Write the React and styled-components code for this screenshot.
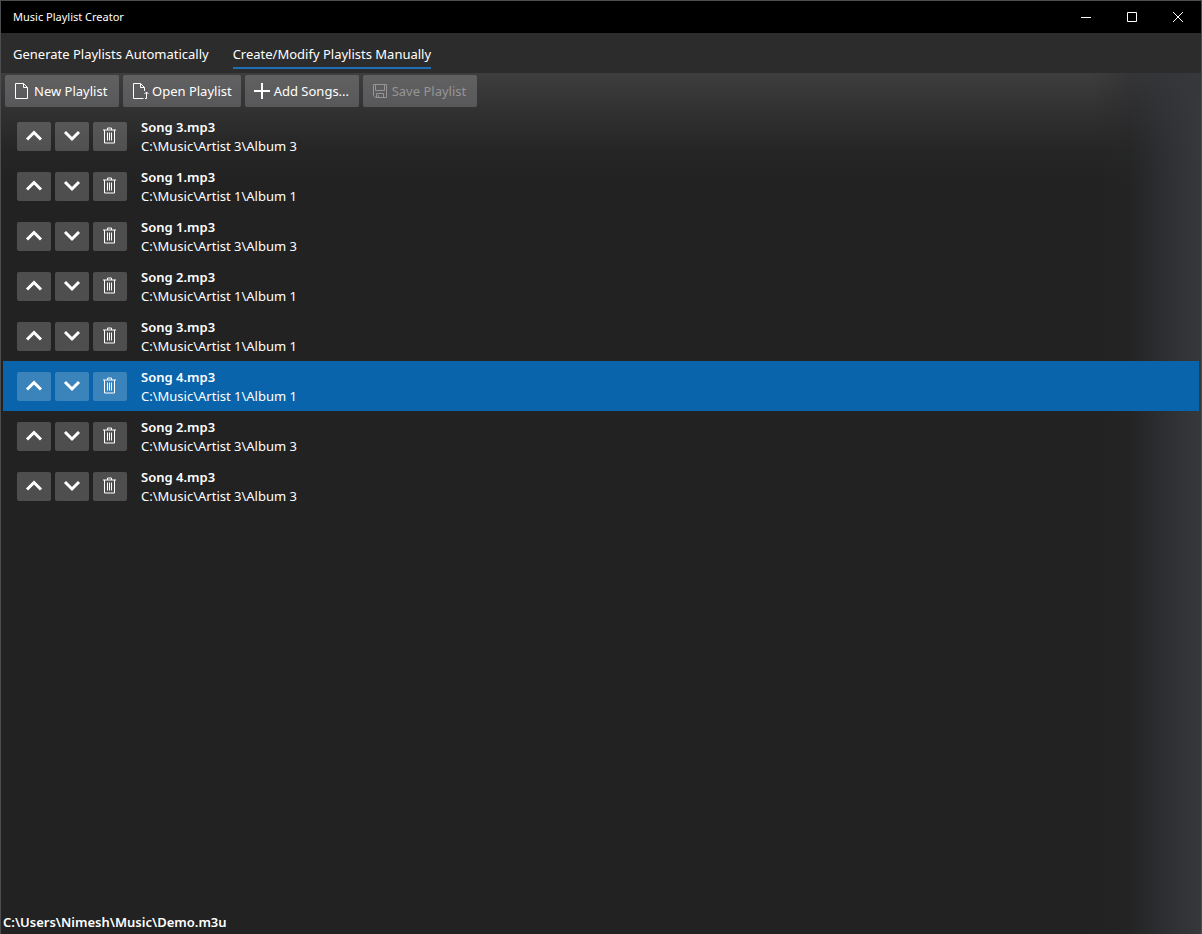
import { useState } from 'react';
import styled, { createGlobalStyle } from 'styled-components';

const songs = [
	{ id: 1, name: 'Song 3.mp3', folder: 'C:\\Music\\Artist 3\\Album 3' },
	{ id: 2, name: 'Song 1.mp3', folder: 'C:\\Music\\Artist 1\\Album 1' },
	{ id: 3, name: 'Song 1.mp3', folder: 'C:\\Music\\Artist 3\\Album 3' },
	{ id: 4, name: 'Song 2.mp3', folder: 'C:\\Music\\Artist 1\\Album 1' },
	{ id: 5, name: 'Song 3.mp3', folder: 'C:\\Music\\Artist 1\\Album 1' },
	{ id: 6, name: 'Song 4.mp3', folder: 'C:\\Music\\Artist 1\\Album 1' },
	{ id: 7, name: 'Song 2.mp3', folder: 'C:\\Music\\Artist 3\\Album 3' },
	{ id: 8, name: 'Song 4.mp3', folder: 'C:\\Music\\Artist 3\\Album 3' },
];

const iconPaths = {
	page: 'M1.5 .5H9.5L13.5 4.5V15.5H1.5ZM9.5 .5V4.5H13.5',
	open: 'M11.5 15.5H1.5V.5H8.5L12.5 4.5V8M8.5 .5V4.5H12.5M14.5 15.5V9M12.5 11L14.5 9L16.5 11M13 15.5H14.5',
	plus: 'M8 0V16M0 8H16',
	save: 'M1.5 1.5H14.5V14.5H3.5L1.5 12.5ZM3.5 1.5V7.5H12.5V1.5M4.5 14.5V10.5H11.5V14.5M6.5 12V14.5',
	up: 'M1 11.5L8 4.5L15 11.5',
	down: 'M1 4L8 11L15 4',
	trash: 'M1 2H14M5.5 2V0H9.5V2M2.5 2V15H12.5V2M5.5 4.5V12.5M7.5 4.5V12.5M9.5 4.5V12.5',
	minimize: 'M3 8.5H13',
	maximize: 'M3.5 3.5H12.5V12.5H3.5Z',
	close: 'M3 3L13 13M13 3L3 13',
};

function Icon({ name, weight = 1 }) {
	return (
		<Glyph viewBox="0 0 16 16" strokeWidth={weight} aria-hidden="true">
			<path d={iconPaths[name]} />
		</Glyph>
	);
}

function SongRow({ song, selected, onSelect }) {
	return (
		<Row $selected={selected} onClick={onSelect}>
			<RowActions>
				<RowButton aria-label="Move up">
					<Icon name="up" weight={3} />
				</RowButton>
				<RowButton aria-label="Move down">
					<Icon name="down" weight={3} />
				</RowButton>
				<RowButton aria-label="Remove">
					<Icon name="trash" />
				</RowButton>
			</RowActions>
			<SongText>
				<SongName>{song.name}</SongName>
				<SongFolder>{song.folder}</SongFolder>
			</SongText>
		</Row>
	);
}

function App() {
	const [tab, setTab] = useState('manual');
	const [selected, setSelected] = useState(6);

	return (
		<Window>
			<GlobalStyle />
			<TitleBar>
				<Title>Music Playlist Creator</Title>
				<CaptionButton aria-label="Minimize">
					<Icon name="minimize" />
				</CaptionButton>
				<CaptionButton aria-label="Maximize">
					<Icon name="maximize" />
				</CaptionButton>
				<CaptionButton aria-label="Close">
					<Icon name="close" />
				</CaptionButton>
			</TitleBar>
			<Tabs role="tablist">
				<Tab role="tab" aria-selected={tab === 'auto'} onClick={() => setTab('auto')}>
					Generate Playlists Automatically
				</Tab>
				<Tab role="tab" aria-selected={tab === 'manual'} onClick={() => setTab('manual')}>
					Create/Modify Playlists Manually
				</Tab>
			</Tabs>
			<Content>
				<Toolbar>
					<ToolButton>
						<Icon name="page" />
						New Playlist
					</ToolButton>
					<ToolButton>
						<Icon name="open" />
						Open Playlist
					</ToolButton>
					<ToolButton>
						<Icon name="plus" weight={2} />
						Add Songs...
					</ToolButton>
					<ToolButton disabled>
						<Icon name="save" />
						Save Playlist
					</ToolButton>
				</Toolbar>
				<SongList>
					{songs.map((song) => (
						<SongRow
							key={song.id}
							song={song}
							selected={song.id === selected}
							onSelect={() => setSelected(song.id)}
						/>
					))}
				</SongList>
				<StatusBar>C:\Users\Nimesh\Music\Demo.m3u</StatusBar>
			</Content>
		</Window>
	);
}

export default App;

const GlobalStyle = createGlobalStyle`
	* {
		box-sizing: border-box;
	}
	body {
		margin: 0;
		background: #222222;
		color: #ffffff;
		font-family: 'Noto Sans', 'Open Sans', sans-serif;
		font-size: 13px;
		line-height: 19px;
	}
	button {
		border: 0;
		padding: 0;
		color: inherit;
		font: inherit;
	}
`;
const Window = styled.div`
	min-height: 100vh;
	display: flex;
	flex-direction: column;
	border: 1px solid #4b4d4e;
	border-bottom: 0;
`;
const Glyph = styled.svg`
	width: 16px;
	height: 16px;
	flex: none;
	fill: none;
	stroke: currentColor;
	overflow: visible;
`;
const TitleBar = styled.header`
	display: flex;
	align-items: center;
	height: 32px;
	padding-left: 12px;
	background: #000000;
`;
const Title = styled.h1`
	flex: 1;
	margin: 0;
	font-size: 11px;
	font-weight: 400;
	line-height: 16px;
`;
const CaptionButton = styled.button`
	display: flex;
	align-items: center;
	justify-content: center;
	width: 46px;
	height: 32px;
	background: transparent;
`;
const Tabs = styled.nav`
	display: flex;
	gap: 24px;
	height: 40px;
	padding: 0 12px;
	background: #2c2c2c;
`;
const Tab = styled.button`
	height: 36px;
	padding-top: 8px;
	background: transparent;
	border-bottom: 2px solid transparent;

	&[aria-selected='true'] {
		border-color: #1c6fb5;
	}
`;
const Content = styled.main`
	flex: 1;
	display: flex;
	flex-direction: column;
	background: linear-gradient(to left, #36383c, rgba(50, 52, 56, 0.8) 30px, rgba(38, 39, 41, 0.4) 70px, rgba(34, 34, 34, 0) 110px),
		linear-gradient(#3e3e3f, #323233 35px, #262626 75px, #222222 110px);
`;
const Toolbar = styled.div`
	display: flex;
	gap: 4px;
	padding: 2px 4px 4px;
`;
const ToolButton = styled.button`
	display: flex;
	align-items: center;
	gap: 4px;
	min-width: 114px;
	height: 32px;
	padding: 0 9px;
	border-radius: 2px;
	background: linear-gradient(#616162, #58585a);

	&:disabled {
		color: #959596;
	}
`;
const SongList = styled.ul`
	flex: 1;
	margin: 0;
	padding: 0 2px;
	list-style: none;
`;
const Row = styled.li`
	display: flex;
	align-items: center;
	gap: 14px;
	height: 50px;
	padding: 0 14px;
	background: ${({ $selected }) => ($selected ? '#0964ab' : 'transparent')};
`;
const RowActions = styled.div`
	display: flex;
	gap: 4px;
`;
const RowButton = styled.button`
	display: flex;
	align-items: center;
	justify-content: center;
	width: 34px;
	height: 29px;
	border-radius: 2px;
	background: rgba(255, 255, 255, 0.2);
`;
const SongText = styled.div`
	padding-top: 2px;
`;
const SongName = styled.div`
	font-weight: 600;
`;
const SongFolder = styled.div`
	font-weight: 400;
`;
const StatusBar = styled.footer`
	padding: 0 2px 2px;
	font-weight: 600;
`;
